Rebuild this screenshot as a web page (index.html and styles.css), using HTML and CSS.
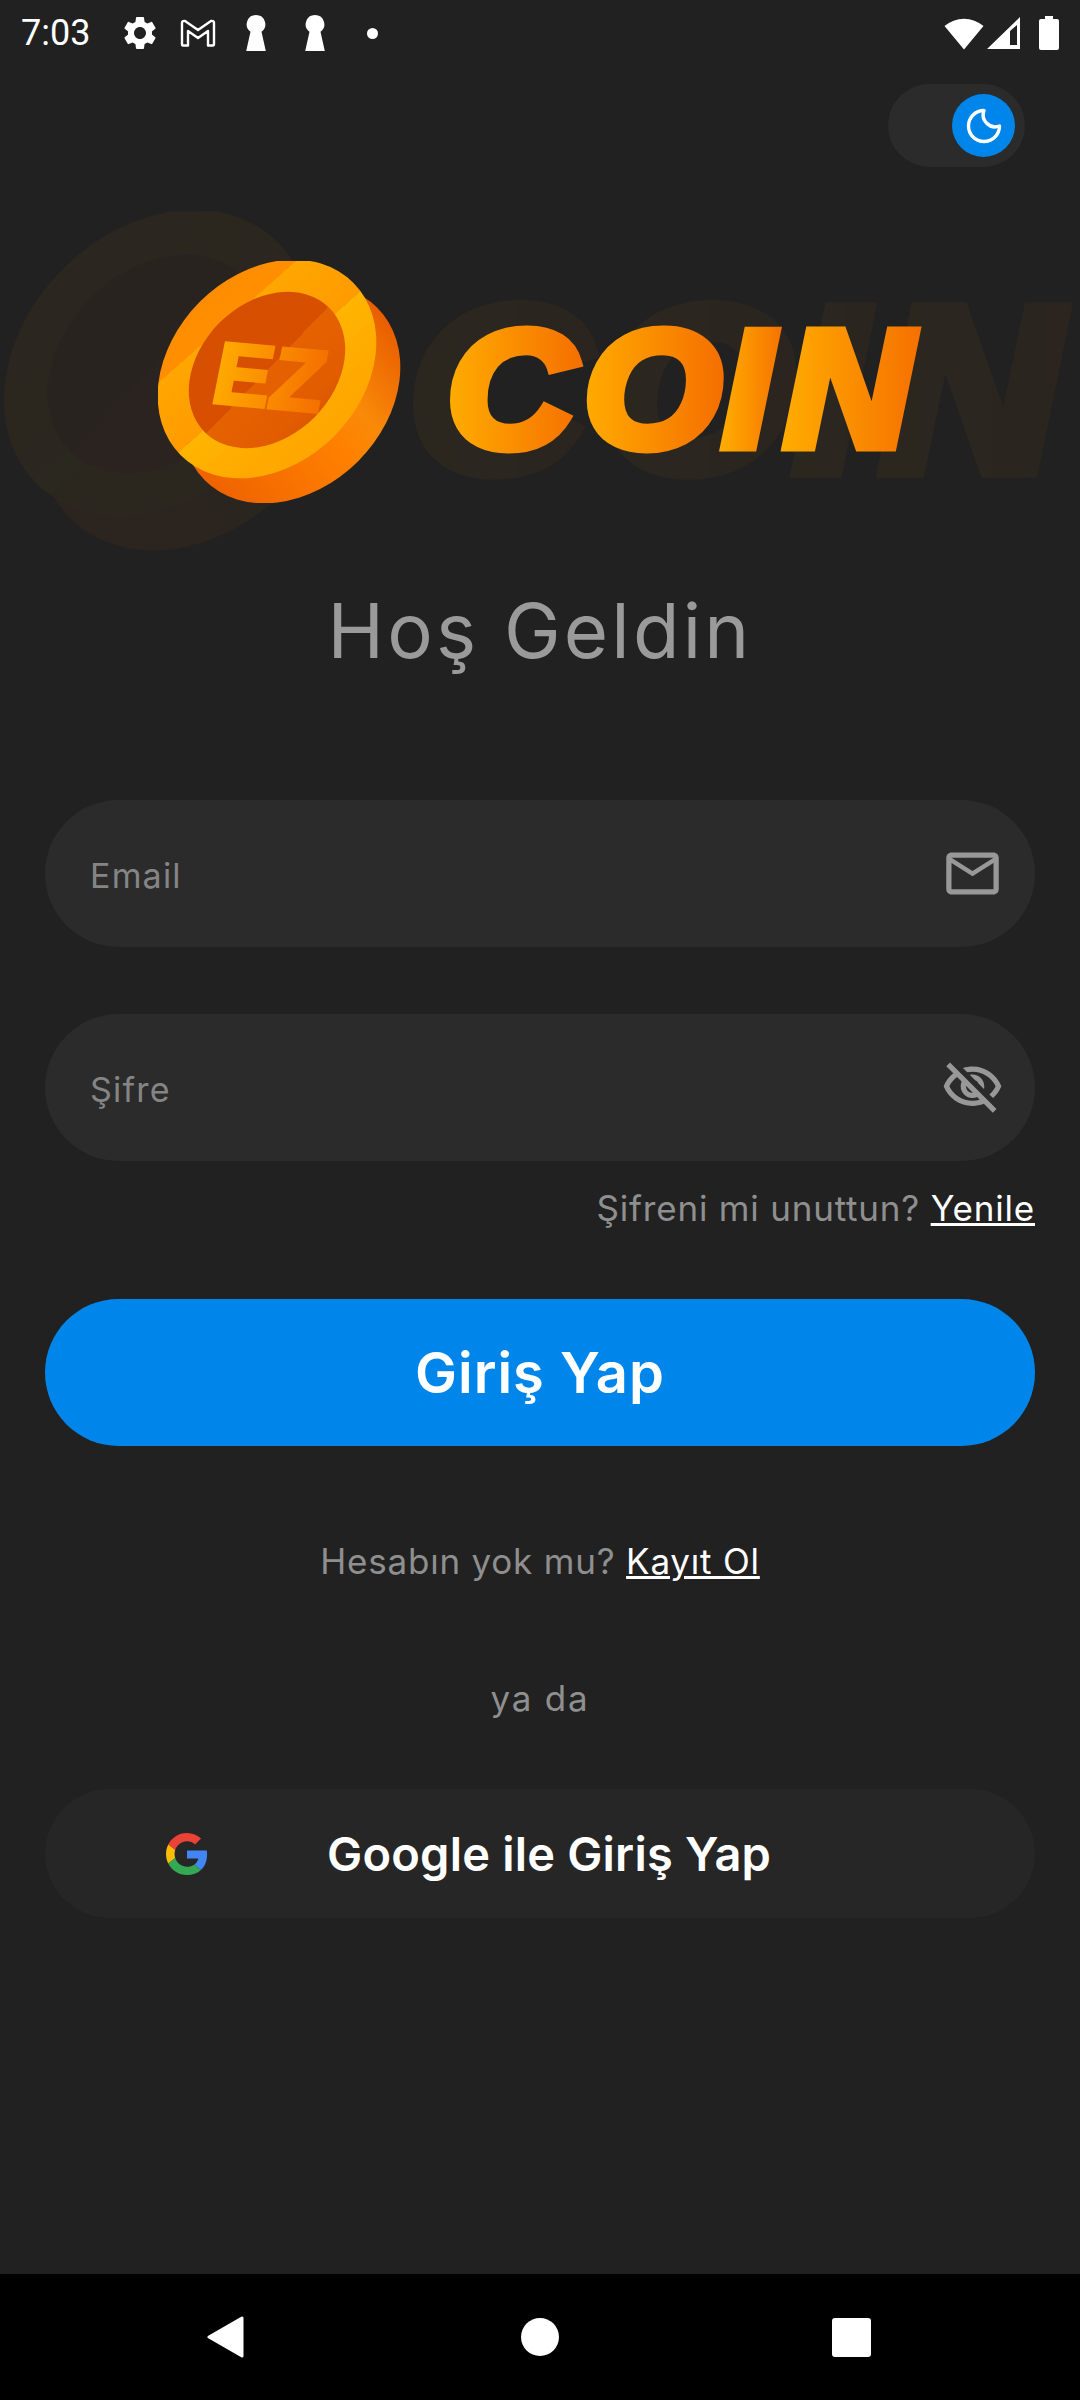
FILE: index.html
```html
<!DOCTYPE html>
<html lang="tr">
<head>
    <meta charset="UTF-8">
    <title>EZ Coin</title>
    <link rel="stylesheet" href="styles.css">
</head>
<body>
    <!-- status bar -->
    <div class="status">
        <div class="status-left">
            <span class="time">7:03</span>
            <svg class="ic-gear" viewBox="0 0 24 24"><path fill="#fff" d="M19.14 12.94c.04-.3.06-.61.06-.94 0-.32-.02-.64-.07-.94l2.03-1.58c.18-.14.23-.41.12-.61l-1.92-3.32c-.12-.22-.37-.29-.59-.22l-2.39.96c-.5-.38-1.03-.7-1.62-.94l-.36-2.54c-.04-.24-.24-.41-.48-.41h-3.84c-.24 0-.43.17-.47.41l-.36 2.54c-.59.24-1.13.57-1.62.94l-2.39-.96c-.22-.08-.47 0-.59.22L2.74 8.87c-.12.21-.08.47.12.61l2.03 1.58c-.05.3-.09.63-.09.94s.02.64.07.94l-2.03 1.58c-.18.14-.23.41-.12.61l1.92 3.32c.12.22.37.29.59.22l2.39-.96c.5.38 1.03.7 1.62.94l.36 2.54c.05.24.24.41.48.41h3.84c.24 0 .44-.17.47-.41l.36-2.54c.59-.24 1.13-.56 1.62-.94l2.39.96c.22.08.47 0 .59-.22l1.92-3.32c.12-.22.07-.47-.12-.61l-2.01-1.58zM12 15.6c-1.98 0-3.6-1.62-3.6-3.6s1.62-3.6 3.6-3.6 3.6 1.62 3.6 3.6-1.62 3.6-3.6 3.6z"/></svg>
            <svg class="ic-gmail" viewBox="0 0 36 28"><path fill="none" stroke="#fff" stroke-width="2.4" stroke-linejoin="round" d="M2 4Q2 1.5 5 2L18 11 31 2Q34 1.5 34 4V25Q34 26.500 33 26.500H28V12L18 19 8 12V26.500H3Q2 26.500 2 25Z"/></svg>
            <svg class="ic-key" viewBox="0 0 20 36"><path fill="#fff" d="M10 0a9.300 9.300 0 0 1 5.500 16.800L19.800 36H.2L4.500 16.800A9.300 9.300 0 0 1 10 0z"/></svg>
            <svg class="ic-key ic-key2" viewBox="0 0 20 36"><path fill="#fff" d="M10 0a9.300 9.300 0 0 1 5.500 16.800L19.800 36H.2L4.500 16.800A9.300 9.300 0 0 1 10 0z"/></svg>
            <span class="dot"></span>
        </div>
        <div class="status-right">
            <svg class="ic-wifi" viewBox="0 0 40 34"><path fill="#fff" d="M20 33.500.5 10a30 30 0 0 1 39 0z"/></svg>
            <svg class="ic-signal" viewBox="0 0 33 32"><path fill="#fff" fill-rule="evenodd" d="M0 32 33 0V32zM23 14V28H30V8z"/></svg>
            <svg class="ic-battery" viewBox="0 0 20 34"><path fill="#fff" d="M6 0h8v3h4a2 2 0 0 1 2 2v27a2 2 0 0 1-2 2H2a2 2 0 0 1-2-2V5a2 2 0 0 1 2-2h4z"/></svg>
        </div>
    </div>

    <!-- theme switch -->
    <div class="toggle">
        <span class="knob">
            <svg class="ic-moon" viewBox="0 0 40 40"><path fill="none" stroke="#fff" stroke-width="3.400" stroke-linejoin="round" d="M20 4.500A15.500 15.500 0 1 0 35.500 20 12 12 0 0 1 20 4.500z"/></svg>
        </span>
    </div>

    <!-- logo, coordinates are page pixels -->
    <svg class="logo" viewBox="0 190 1080 390">
        <defs>
            <linearGradient id="gLetter" x1="0" y1="0" x2="1" y2="0">
                <stop offset="0" stop-color="#ffab00"/>
                <stop offset="1" stop-color="#f56f00"/>
            </linearGradient>
            <linearGradient id="gC" href="#gLetter" gradientUnits="userSpaceOnUse" x1="425" x2="550" y1="0" y2="0"/>
            <linearGradient id="gO" href="#gLetter" gradientUnits="userSpaceOnUse" x1="552" x2="682" y1="0" y2="0"/>
            <linearGradient id="gI" href="#gLetter" gradientUnits="userSpaceOnUse" x1="682" x2="742" y1="0" y2="0"/>
            <linearGradient id="gN" href="#gLetter" gradientUnits="userSpaceOnUse" x1="740" x2="872" y1="0" y2="0"/>
            <linearGradient id="gRing" gradientUnits="userSpaceOnUse" x1="190" y1="280" x2="345" y2="455" gradientTransform="rotate(45 267 369)">
                <stop offset="0" stop-color="#ff8a00"/>
                <stop offset=".24" stop-color="#ff8f00"/>
                <stop offset=".24" stop-color="#ffa600"/>
                <stop offset=".52" stop-color="#ff9b00"/>
                <stop offset=".52" stop-color="#ffb500"/>
                <stop offset=".75" stop-color="#ffaa00"/>
                <stop offset="1" stop-color="#ffa300"/>
            </linearGradient>
            <linearGradient id="gInner" gradientUnits="userSpaceOnUse" x1="205" y1="310" x2="330" y2="430" gradientTransform="rotate(45 267 370)">
                <stop offset="0" stop-color="#d64f00"/>
                <stop offset=".5" stop-color="#d84f00"/>
                <stop offset=".5" stop-color="#e56200"/>
                <stop offset=".8" stop-color="#e25c00"/>
                <stop offset="1" stop-color="#d75200"/>
            </linearGradient>
            <linearGradient id="gEdge" gradientUnits="userSpaceOnUse" x1="190" y1="500" x2="400" y2="330" gradientTransform="rotate(45 291 394)">
                <stop offset="0" stop-color="#ec5d00"/>
                <stop offset=".55" stop-color="#ff8000"/>
                <stop offset=".7" stop-color="#f98a08"/>
                <stop offset="1" stop-color="#e85c00"/>
            </linearGradient>
            <clipPath id="coinClip"><rect x="158" y="261" width="250" height="242"/></clipPath>
            <g id="artCoin" clip-path="url(#coinClip)">
                <ellipse cx="291" cy="394" rx="122" ry="95" transform="rotate(-45 291 394)" fill="url(#gEdge)"/>
                <ellipse cx="267" cy="369" rx="122" ry="95" transform="rotate(-45 267 369)" fill="url(#gRing)"/>
                <ellipse cx="267" cy="370" rx="88" ry="67" transform="rotate(-45 267 370)" fill="url(#gInner)"/>
            </g>
            <text id="artWord" class="logo-coin" transform="scale(1.06 1)" y="446"><tspan x="422" fill="url(#gC)" stroke="url(#gC)">C</tspan><tspan x="551" fill="url(#gO)" stroke="url(#gO)">O</tspan><tspan x="682" fill="url(#gI)" stroke="url(#gI)">I</tspan><tspan x="740" fill="url(#gN)" stroke="url(#gN)">N</tspan></text>
        </defs>
        <g class="logo-ghost" transform="matrix(1.4 0 0 1.4 -217 -154)">
            <use href="#artCoin"/>
            <use href="#artWord"/>
        </g>
        <use href="#artCoin"/>
        <text class="logo-ez" transform="matrix(1 .09 -.2 1 209 402)" fill="url(#gLetter)" stroke="url(#gLetter)">EZ</text>
        <use href="#artWord"/>
    </svg>

    <h1 class="title">Hoş Geldin</h1>

    <div class="field field-email">
        <span class="placeholder">Email</span>
        <svg class="field-icon" viewBox="0 0 24 24"><path fill="#989898" d="M20 4H4c-1.100 0-1.990.9-1.990 2L2 18c0 1.100.9 2 2 2h16c1.100 0 2-.9 2-2V6c0-1.100-.9-2-2-2zm0 14H4V8l8 5 8-5v10zm-8-7L4 6h16l-8 5z"/></svg>
    </div>
    <div class="field field-pass">
        <span class="placeholder">Şifre</span>
        <svg class="field-icon" viewBox="0 0 24 24"><path fill="#989898" d="M12 6c3.790 0 7.170 2.130 8.820 5.500-.59 1.220-1.420 2.270-2.410 3.120l1.410 1.410c1.390-1.230 2.490-2.770 3.180-4.530C21.270 7.110 17 4 12 4c-1.270 0-2.490.2-3.640.57l1.650 1.650C10.660 6.090 11.320 6 12 6zm-1.070 1.140L13 9.210c.57.25 1.030.71 1.280 1.280l2.070 2.070c.08-.34.14-.7.14-1.070C16.500 9.010 14.480 7 12 7c-.37 0-.72.05-1.070.14zM2.010 3.870l2.680 2.680C3.060 7.830 1.770 9.530 1 11.500 2.730 15.890 7 19 12 19c1.520 0 2.980-.29 4.320-.82l3.420 3.420 1.410-1.410L3.420 2.450 2.010 3.870zm7.500 7.500l2.610 2.610c-.04.01-.08.02-.12.02-1.380 0-2.500-1.120-2.500-2.500 0-.05.01-.08.01-.13zm-3.400-3.400l1.750 1.750c-.23.55-.36 1.150-.36 1.780 0 2.480 2.020 4.500 4.500 4.500.63 0 1.230-.13 1.770-.36l.98.98c-.88.24-1.800.38-2.750.38-3.790 0-7.170-2.130-8.820-5.500.7-1.430 1.720-2.610 2.930-3.530z"/></svg>
    </div>

    <p class="line forgot">Şifreni mi unuttun? <a href="#">Yenile</a></p>

    <button class="btn-login">Giriş Yap</button>

    <p class="line signup">Hesabın yok mu? <a href="#">Kayıt Ol</a></p>
    <p class="line orline">ya da</p>

    <button class="btn-google">
        <svg class="ic-google" viewBox="0 0 48 48">
            <path fill="#EA4335" d="M24 9.500c3.540 0 6.710 1.220 9.210 3.600l6.850-6.850C35.900 2.380 30.470 0 24 0 14.620 0 6.510 5.380 2.560 13.220l7.980 6.190C12.430 13.720 17.740 9.500 24 9.500z"/>
            <path fill="#4285F4" d="M46.980 24.550c0-1.570-.15-3.090-.38-4.550H24v9.020h12.940c-.58 2.960-2.260 5.480-4.780 7.180l7.730 6c4.510-4.180 7.090-10.360 7.090-17.650z"/>
            <path fill="#FBBC05" d="M10.530 28.590c-.48-1.450-.76-2.990-.76-4.590s.27-3.140.76-4.590l-7.980-6.190C.92 16.460 0 20.120 0 24c0 3.880.92 7.540 2.560 10.780l7.970-6.190z"/>
            <path fill="#34A853" d="M24 48c6.480 0 11.930-2.130 15.890-5.810l-7.730-6c-2.150 1.450-4.920 2.300-8.160 2.300-6.260 0-11.570-4.220-13.470-9.910l-7.980 6.190C6.510 42.620 14.620 48 24 48z"/>
        </svg>
        <span>Google ile Giriş Yap</span>
    </button>

    <!-- nav bar -->
    <div class="nav">
        <svg class="nav-back" viewBox="0 0 37 42"><path fill="#fff" stroke="#fff" stroke-width="3" stroke-linejoin="round" d="M35 2V40L2 21z"/></svg>
        <span class="nav-home"></span>
        <span class="nav-recent"></span>
    </div>
</body>
</html>
```

FILE: styles.css
```css
*{
    box-sizing: border-box;
}
body{
    margin: 0;
    width: 1080px;
    min-height: 2400px;
    display: flex;
    flex-direction: column;
    background-color: #212121;
    font-family: "Inter", "Noto Sans", sans-serif;
    color: #8f8f8f;
}
a{
    color: #fff;
    text-decoration: underline;
}
svg{
    display: block;
    flex: none;
}

/*--------------status bar----------------*/
.status{
    height: 66px;
    padding: 0 21px;
    display: flex;
    justify-content: space-between;
    align-items: center;
}
.status-left, .status-right{
    display: flex;
    align-items: center;
}
.time{
    width: 70px;
    font-family: "Roboto", sans-serif;
    font-size: 36px;
    color: #fff;
}
.ic-gear{
    width: 40px;
    height: 40px;
    margin-left: 29px;
}
.ic-gmail{
    width: 36px;
    height: 28px;
    margin-left: 20px;
}
.ic-key{
    width: 20px;
    height: 36px;
    margin-left: 30px;
}
.ic-key2{
    margin-left: 39px;
}
.dot{
    width: 11px;
    height: 11px;
    margin-left: 42px;
    border-radius: 50%;
    background-color: #fff;
}
.ic-wifi{
    width: 40px;
    height: 34px;
}
.ic-signal{
    width: 33px;
    height: 32px;
    margin-left: 3px;
}
.ic-battery{
    width: 20px;
    height: 34px;
    margin-left: 19px;
}

/*--------------theme switch----------------*/
.toggle{
    width: 137px;
    height: 83px;
    margin: 18px 55px 0 auto;
    padding-right: 10px;
    display: flex;
    justify-content: flex-end;
    align-items: center;
    border-radius: 42px;
    background-color: #2b2b2b;
}
.knob{
    width: 63px;
    height: 63px;
    display: flex;
    justify-content: center;
    align-items: center;
    border-radius: 50%;
    background-color: #0086ea;
}
.ic-moon{
    width: 40px;
    height: 40px;
}

/*--------------logo----------------*/
.logo{
    width: 1080px;
    height: 390px;
    margin-top: 23px;
}
.logo-ghost{
    opacity: .05;
}
.logo-coin{
    font-family: "Liberation Sans", sans-serif;
    font-weight: bold;
    font-style: italic;
    font-size: 166px;
    stroke-width: 11px;
}
.logo-ez{
    font-family: "Liberation Sans", sans-serif;
    font-weight: bold;
    font-size: 86px;
    stroke-width: 4px;
}

/*--------------form----------------*/
.title{
    margin: 0;
    height: 100px;
    line-height: 100px;
    text-align: center;
    font-size: 76px;
    font-weight: 400;
    letter-spacing: 3.2px;
    color: #9a9a9a;
}
.field{
    height: 147px;
    margin: 0 45px;
    padding: 0 31px 0 45px;
    display: flex;
    justify-content: space-between;
    align-items: center;
    border-radius: 74px;
    background-color: #2b2b2b;
}
.field-email{
    margin-top: 120px;
}
.field-pass{
    margin-top: 67px;
}
.placeholder{
    padding-top: 3px;
    font-size: 34px;
    letter-spacing: 1.200px;
    color: #858585;
}
.field-icon{
    width: 63px;
    height: 63px;
}
.line{
    margin: 0;
    height: 48px;
    line-height: 48px;
    font-size: 35px;
    letter-spacing: .8px;
    text-align: center;
}
.forgot{
    margin: 23px 45px 0;
    text-align: right;
}
.btn-login{
    height: 147px;
    margin: 67px 45px 0;
    border: 0;
    border-radius: 74px;
    background-color: #0086ea;
    color: #fff;
    font-family: inherit;
    font-size: 56px;
    font-weight: 600;
    letter-spacing: 1px;
}
.signup{
    margin-top: 91px;
}
.orline{
    margin-top: 89px;
    letter-spacing: 1.800px;
}
.btn-google{
    height: 129px;
    margin: 67px 45px 0;
    padding: 0 0 0 121px;
    display: flex;
    align-items: center;
    gap: 119px;
    border: 0;
    border-radius: 65px;
    background-color: #262626;
    color: #fff;
    font-family: inherit;
    font-size: 47px;
    font-weight: 600;
    letter-spacing: .2px;
}
.ic-google{
    width: 42px;
    height: 42px;
}

/*--------------nav bar----------------*/
.nav{
    height: 126px;
    margin-top: auto;
    padding: 0 209px 0 207px;
    display: flex;
    justify-content: space-between;
    align-items: center;
    background-color: #000;
}
.nav-back{
    width: 37px;
    height: 42px;
}
.nav-home{
    width: 38px;
    height: 38px;
    margin-left: 4px;
    border-radius: 50%;
    background-color: #fff;
}
.nav-recent{
    width: 39px;
    height: 39px;
    border-radius: 3px;
    background-color: #fff;
}
```
